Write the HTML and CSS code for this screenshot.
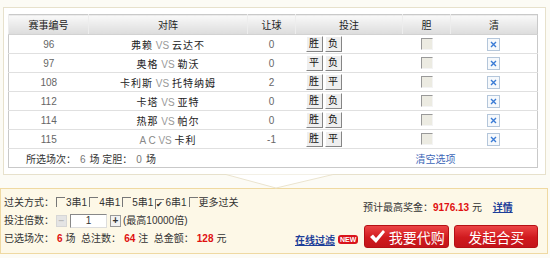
FILE: index.html
```html
<!DOCTYPE html>
<html lang="zh-CN">
<head>
  <meta charset="UTF-8" />
  <title>投注确认</title>
  <link rel="stylesheet" href="styles.css">
</head>
<body>

  <div class="panel">
    <table class="match-table">
      <colgroup>
        <col class="c-no"><col class="c-vs"><col class="c-rq"><col class="c-bet"><col class="c-dan"><col class="c-del">
      </colgroup>
      <thead>
        <tr><th>赛事编号</th><th>对阵</th><th>让球</th><th>投注</th><th>胆</th><th>清</th></tr>
      </thead>
      <tbody>
        <tr>
          <td class="num">96</td>
          <td><span class="team">弗赖</span> <span class="vs">VS</span> <span class="team">云达不</span></td>
          <td class="num">0</td>
          <td class="bet"><span class="opt">胜</span><span class="opt">负</span></td>
          <td><span class="dan"></span></td>
          <td><span class="del"><svg width="7" height="7" viewBox="0 0 7 7"><path d="M1 1L6 6M6 1L1 6" /></svg></span></td>
        </tr>
        <tr>
          <td class="num">97</td>
          <td><span class="team">奥格</span> <span class="vs">VS</span> <span class="team">勒沃</span></td>
          <td class="num">0</td>
          <td class="bet"><span class="opt">平</span><span class="opt">负</span></td>
          <td><span class="dan"></span></td>
          <td><span class="del"><svg width="7" height="7" viewBox="0 0 7 7"><path d="M1 1L6 6M6 1L1 6" /></svg></span></td>
        </tr>
        <tr>
          <td class="num">108</td>
          <td><span class="team">卡利斯</span> <span class="vs">VS</span> <span class="team">托特纳姆</span></td>
          <td class="num">2</td>
          <td class="bet"><span class="opt">胜</span><span class="opt">平</span></td>
          <td><span class="dan"></span></td>
          <td><span class="del"><svg width="7" height="7" viewBox="0 0 7 7"><path d="M1 1L6 6M6 1L1 6" /></svg></span></td>
        </tr>
        <tr>
          <td class="num">112</td>
          <td><span class="team">卡塔</span> <span class="vs">VS</span> <span class="team">亚特</span></td>
          <td class="num">0</td>
          <td class="bet"><span class="opt">胜</span><span class="opt">负</span></td>
          <td><span class="dan"></span></td>
          <td><span class="del"><svg width="7" height="7" viewBox="0 0 7 7"><path d="M1 1L6 6M6 1L1 6" /></svg></span></td>
        </tr>
        <tr>
          <td class="num">114</td>
          <td><span class="team">热那</span> <span class="vs">VS</span> <span class="team">帕尔</span></td>
          <td class="num">0</td>
          <td class="bet"><span class="opt">胜</span><span class="opt">负</span></td>
          <td><span class="dan"></span></td>
          <td><span class="del"><svg width="7" height="7" viewBox="0 0 7 7"><path d="M1 1L6 6M6 1L1 6" /></svg></span></td>
        </tr>
        <tr>
          <td class="num">115</td>
          <td><span class="team-ac">A C</span> <span class="vs">VS</span> <span class="team">卡利</span></td>
          <td class="num">-1</td>
          <td class="bet"><span class="opt">胜</span><span class="opt">平</span></td>
          <td><span class="dan"></span></td>
          <td><span class="del"><svg width="7" height="7" viewBox="0 0 7 7"><path d="M1 1L6 6M6 1L1 6" /></svg></span></td>
        </tr>
      </tbody>
      <tfoot>
        <tr>
          <td colspan="4" class="picked">所选场次：<span class="gray">6</span>场 定胆：<span class="gray">0</span>场</td>
          <td colspan="2" class="clear"><a href="#">清空选项</a></td>
        </tr>
      </tfoot>
    </table>
    <!-- little pointer under the panel -->
    <svg class="pointer" width="108" height="15" viewBox="0 0 108 15">
      <polygon points="0,0.5 50,14 107,0.5" fill="#fff" />
      <polyline points="0,0.5 50,14 107,0.5" fill="none" stroke="#ebe4cf" stroke-width="1" />
    </svg>
  </div>

  <div class="summary">
    <div class="summary-left">
      <div class="line">过关方式：<span class="cb"></span>3串1<span class="cb"></span>4串1<span class="cb"></span>5串1<span class="cb">&#10004;</span>6串1<span class="cb"></span>更多过关</div>
      <div class="line">投注倍数：<span class="step minus">&minus;</span><span class="times">1</span><span class="step plus">+</span>(最高10000倍)</div>
      <div class="line">已选场次：<b class="red">6</b>场 &nbsp;总注数：<b class="red">64</b>注 &nbsp;总金额：<b class="red">128</b>元</div>
    </div>

    <div class="summary-right">
      <div class="prize">预计最高奖金：<b class="red">9176.13</b> 元 <a href="#" class="detail">详情</a></div>
      <div class="actions">
        <a href="#" class="filter">在线过滤</a>
        <span class="new-badge">NEW</span>
        <button class="red-btn buy"><svg width="17" height="15" viewBox="0 0 17 15"><path d="M1 8 L4 5.5 L7 9 L14 1 L16 3 L7 14 Z" fill="#fff" /></svg>我要代购</button>
        <button class="red-btn">发起合买</button>
      </div>
    </div>
  </div>

</body>
</html>
```

FILE: styles.css
```css
/* PAGE */
body {
  margin: 0;
  background: #fcfbf5;
  font-family: "Liberation Sans", "Noto Sans CJK SC", sans-serif;
  font-size: 10px;
  color: #333;
}
a {
  text-decoration: none;
}

/* TOP PANEL WITH MATCH TABLE */
.panel {
  position: relative;
  width: 529px;
  margin: 7px 0 0 3px;
  padding: 6px 8px 6px 4px;
  background: #fff;
  border: 1px solid #e7e1cc;
}
.pointer {
  position: absolute;
  left: 222px;
  bottom: -15px;
}
.match-table {
  width: 529px;
  border-collapse: collapse;
  table-layout: fixed;
  border: 1px solid #c9c9c9;
}
.c-no { width: 80px; }
.c-vs { width: 159px; }
.c-rq { width: 48px; }
.c-bet { width: 107px; }
.c-dan { width: 48px; }
.c-del { width: 87px; }

.match-table th {
  height: 19px;
  padding: 0;
  font-weight: normal;
  color: #222;
  background: linear-gradient(#f9f9f9, #dcdcdc);
  border-left: 1px solid #ededed;
  border-bottom: 1px solid #d2d2d2;
}
.match-table td {
  height: 18px;
  padding: 0;
  text-align: center;
  border-bottom: 1px solid #e0e0e0;
}
.num {
  color: #666;
}
.team {
  color: #222;
  letter-spacing: 1px;
}
.team-ac {
  color: #888;
}
.vs {
  color: #999;
}
.match-table td.bet {
  text-align: left;
  padding-left: 10px;
}
.opt {
  display: inline-block;
  width: 15px;
  height: 14px;
  line-height: 14px;
  margin-right: 2px;
  text-align: center;
  vertical-align: middle;
  color: #111;
  background: #efefef;
  border: 1px solid;
  border-color: #fff #858585 #858585 #fff;
}
.dan {
  display: inline-block;
  width: 10px;
  height: 10px;
  vertical-align: middle;
  background: #ecebe2;
  border: 1px solid;
  border-color: #999 #f4f4f4 #f4f4f4 #999;
}
.del {
  display: inline-flex;
  align-items: center;
  justify-content: center;
  width: 11px;
  height: 11px;
  vertical-align: middle;
  background: #f6f9fc;
  border: 1px solid #b4c6da;
}
.del svg path {
  stroke: #3a7bd5;
  stroke-width: 1.4;
}
.match-table td.picked {
  text-align: left;
  padding-left: 17px;
  color: #333;
  border-bottom: none;
}
.gray {
  color: #777;
  margin: 0 4px;
}
.match-table td.clear {
  text-align: left;
  padding-left: 13px;
  border-bottom: none;
}
.clear a {
  color: #3d67b8;
}

/* BOTTOM SUMMARY BOX */
.summary {
  display: flex;
  width: 546px;
  margin-top: 13px;
  background: #fdf8e7;
  border: 1px solid #efd9a2;
  height: 64px;
}
.summary-left {
  flex: 1;
  padding: 5px 0 0 3px;
}
.line {
  height: 18px;
  line-height: 18px;
  white-space: nowrap;
}
.cb {
  display: inline-block;
  width: 8px;
  height: 9px;
  margin: 0 1px 0 2px;
  vertical-align: -1px;
  border-top: 1px solid #777;
  border-left: 1px solid #777;
  font-size: 8px;
  line-height: 9px;
  color: #222;
}
.step {
  display: inline-block;
  width: 9px;
  height: 10px;
  line-height: 10px;
  text-align: center;
  vertical-align: middle;
  font-size: 10px;
  font-weight: bold;
}
.minus {
  margin: 0 3px 0 2px;
  color: #bbb;
  background: #e4e4e4;
  border: 1px solid #d6d6d6;
}
.plus {
  margin: 0 2px 0 3px;
  color: #333;
  background: #f2f2f2;
  border: 1px solid #999;
}
.times {
  display: inline-block;
  width: 35px;
  height: 12px;
  line-height: 12px;
  text-align: center;
  vertical-align: middle;
  background: #fff;
  border: 1px solid;
  border-color: #888 #ddd #ddd #888;
}
.red {
  color: #e01010;
  margin: 0 3px;
}

.summary-right {
  width: 242px;
  padding: 10px 10px 0 0;
}
.prize {
  height: 18px;
  line-height: 18px;
  padding-left: 68px;
  white-space: nowrap;
}
.prize .red {
  margin: 0;
}
.detail {
  margin-left: 8px;
  color: #1d3f99;
  font-weight: bold;
  text-decoration: underline;
}
.actions {
  display: flex;
  align-items: flex-end;
  margin-top: 8px;
}
.filter {
  flex-shrink: 0;
  white-space: nowrap;
  color: #1d3f99;
  font-weight: bold;
  text-decoration: underline;
  line-height: 12px;
  margin-bottom: 1px;
}
.new-badge {
  flex-shrink: 0;
  margin: 0 6px 4px 3px;
  padding: 0 2px;
  height: 9px;
  line-height: 9px;
  font-size: 7px;
  font-weight: bold;
  color: #fff;
  background: #d9141b;
  border-radius: 3px;
}
.red-btn {
  flex-shrink: 0;
  display: flex;
  align-items: center;
  justify-content: center;
  gap: 3px;
  width: 84px;
  height: 23px;
  padding: 0;
  font-family: "Noto Sans CJK SC", sans-serif;
  font-size: 14px;
  color: #fff;
  background: linear-gradient(#ec4545, #d01a1e 55%, #c3141a);
  border: 1px solid #b51015;
  border-radius: 3px;
  cursor: pointer;
}
.buy {
  width: 85px;
  margin-right: 5px;
}
```
